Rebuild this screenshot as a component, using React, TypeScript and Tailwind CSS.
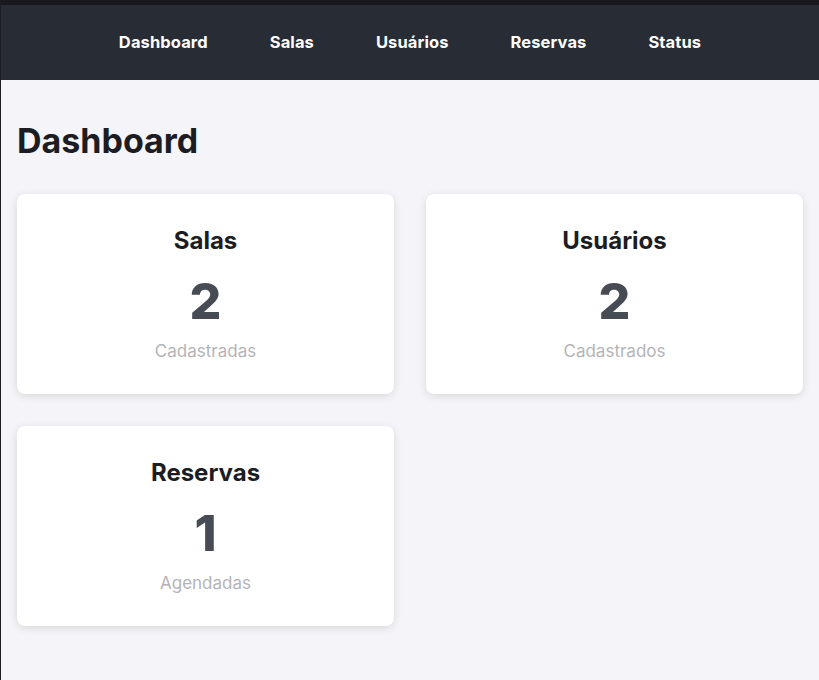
const stats = [
  { title: "Salas", value: 2, label: "Cadastradas" },
  { title: "Usuários", value: 2, label: "Cadastrados" },
  { title: "Reservas", value: 1, label: "Agendadas" },
];

const links = ["Dashboard", "Salas", "Usuários", "Reservas", "Status"];

export default function App() {
  return (
    <div
      className="min-h-screen bg-[#f5f4f9] border-l border-[#1c1c22]"
      style={{ fontFamily: "Inter, 'Liberation Sans', sans-serif" }}
    >
      {/* Top nav */}
      <header className="border-t-[5px] border-[#18181d] bg-[#282c35] h-20 flex items-center justify-center gap-[62px]">
        {links.map((l) => (
          <a key={l} className="text-white text-[16.5px] font-bold tracking-[0.1px] cursor-pointer">
            {l}
          </a>
        ))}
      </header>

      <main className="px-4 pt-[44px] pb-10">
        <h1 className="text-[34px] font-bold text-[#1c1d22] tracking-[0px] leading-none mb-[36px]">
          Dashboard
        </h1>

        <div className="grid grid-cols-2 gap-8">
          {stats.map((s) => (
            <div
              key={s.title}
              className="bg-white rounded-lg h-[200px] flex flex-col items-center pt-[35px] shadow-[0_2px_8px_rgba(0,0,0,0.12)]"
            >
              <h2 className="text-[24px] font-bold text-[#1c1d22] leading-none">{s.title}</h2>
              <div className="text-[50px] font-extrabold text-[#474b53] leading-none mt-[23px]">
                {s.value}
              </div>
              <p className="text-[17px] text-[#b4b4b8] mt-[17px] leading-none">{s.label}</p>
            </div>
          ))}
        </div>
      </main>
    </div>
  );
}
